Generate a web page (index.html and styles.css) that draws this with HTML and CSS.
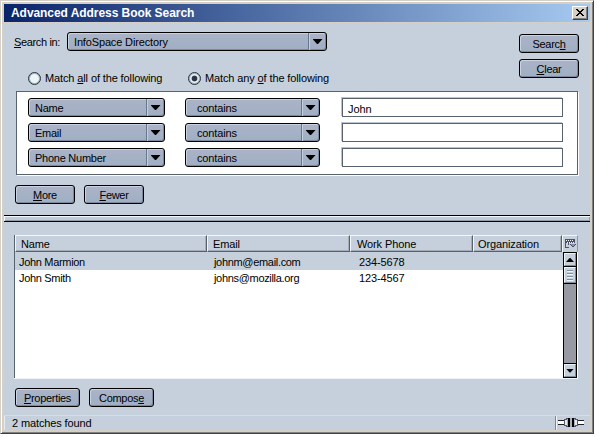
FILE: index.html
```
<!DOCTYPE html>
<html lang="en">
<head>
<meta charset="utf-8">
<title>Advanced Address Book Search</title>
<link rel="stylesheet" href="styles.css">
</head>
<body>
<main class="window">
  <header class="titlebar">
    <h1>Advanced Address Book Search</h1>
    <button class="close" aria-label="Close"><svg width="8" height="7" viewBox="0 0 8 7" shape-rendering="crispEdges"><path d="M0 0h2v1h1v1h2v-1h1v-1h2v1h-1v1h-1v1h-1v1h1v1h1v1h1v1h-2v-1h-1v-1h-2v1h-1v1h-2v-1h1v-1h1v-1h1v-1h-1v-1h-1v-1h-1z" fill="#000"/></svg></button>
  </header>

  <section class="search">
    <div class="top">
      <div class="scope">
        <div class="scope-row">
          <label class="scope-label"><u>S</u>earch in:</label>
          <div class="select wide"><span>InfoSpace Directory</span><i class="arrow"></i></div>
        </div>
        <div class="radios">
          <label class="radio"><i class="dot"></i><span>Match <u>a</u>ll of the following</span></label>
          <label class="radio"><i class="dot on"></i><span>Match any <u>o</u>f the following</span></label>
        </div>
      </div>
      <div class="actions">
        <button class="btn"><span>Searc<u>h</u></span></button>
        <button class="btn"><span><u>C</u>lear</span></button>
      </div>
    </div>
    <div class="rules">
      <div class="rule"><div class="select field"><span>Name</span><i class="arrow"></i></div><div class="select op"><span>contains</span><i class="arrow"></i></div><div class="input"><span>John</span></div></div>
      <div class="rule"><div class="select field"><span>Email</span><i class="arrow"></i></div><div class="select op"><span>contains</span><i class="arrow"></i></div><div class="input"></div></div>
      <div class="rule"><div class="select field"><span>Phone Number</span><i class="arrow"></i></div><div class="select op"><span>contains</span><i class="arrow"></i></div><div class="input"></div></div>
    </div>
    <div class="buttons">
      <button class="btn"><span><u>M</u>ore</span></button>
      <button class="btn"><span><u>F</u>ewer</span></button>
    </div>
  </section>

  <div class="splitter"></div>

  <section class="results">
    <div class="tree">
      <div class="thead">
        <div class="th">Name</div><div class="th">Email</div><div class="th">Work Phone</div><div class="th">Organization</div>
        <div class="picker"><svg width="12" height="11" viewBox="0 0 12 11" shape-rendering="crispEdges"><path d="M1 1h10v4h-10z" fill="#4d526b"/><path d="M2 2h1v1h-1zM4 2h1v1h-1zM6 2h1v1h-1zM8 2h1v1h-1zM3 4h1v1h-1zM5 4h1v1h-1zM7 4h1v1h-1zM9 4h1v1h-1z" fill="#eef3f8"/><path d="M1 5h1v4h3v1h-4zM4 5h1v2h-1zM6 6h6v1h-1v1h-1v1h-2v-1h-1v-1h-1z" fill="#4d526b"/><path d="M7 6h4v1h-1v1h-2v-1h-1z" fill="#8a90a8"/></svg></div>
      </div>
      <div class="tbody">
        <div class="rows">
          <div class="row selected"><span class="c1">John Marmion</span><span class="c2">johnm@email.com</span><span class="c3">234-5678</span></div>
          <div class="row"><span class="c1">John Smith</span><span class="c2">johns@mozilla.org</span><span class="c3">123-4567</span></div>
        </div>
        <div class="scroll">
          <div class="sb up"><i></i></div>
          <div class="thumb"><i></i><i></i><i></i><i></i></div>
          <div class="track"></div>
          <div class="sb down"><i></i></div>
        </div>
      </div>
    </div>
    <div class="buttons lower">
      <button class="btn big"><span><u>P</u>roperties</span></button>
      <button class="btn big"><span>Compos<u>e</u></span></button>
    </div>
  </section>

  <footer class="status">
    <span>2 matches found</span>
    <div class="online"><svg width="26" height="11" viewBox="0 0 26 11" shape-rendering="crispEdges"><path d="M0 4h26v3h-26z" fill="#fff"/><path d="M0 3h26v1h-26zM0 7h26v1h-26z" fill="#222"/><path d="M6 2h2v-1h10v1h2v7h-2v1h-10v-1h-2z" fill="#555b66"/><path d="M7 3h2v5h-2zM17 3h2v5h-2z" fill="#e6e9ee"/><path d="M9 2h1v7h-1zM12 1h2v9h-2zM16 2h1v7h-1z" fill="#aab0b9"/><path d="M10 1h2v9h-2zM14 1h2v9h-2z" fill="#000"/></svg></div>
  </footer>
</main>
</body>
</html>
```
FILE: styles.css
```
* { box-sizing: border-box; }
html, body { margin: 0; background: #fff; }
body {
  width: 597px; height: 437px; overflow: hidden;
  font: 11px/14px "Liberation Sans", Arial, sans-serif; letter-spacing: -.12px; color: #000;
}
button { font: inherit; letter-spacing: -.3px; color: inherit; padding: 0; margin: 0; }
span { white-space: nowrap; }
u { text-underline-offset: 1px; text-decoration-thickness: 1px; text-decoration-skip-ink: none; }

.window {
  width: 594px; height: 434px; display: flex; flex-direction: column;
  border: 1px solid #d4d0c8; border-right-color: #404040; border-bottom-color: #404040;
  box-shadow: inset 1px 1px #fff, inset -1px -1px #808080, inset 0 0 0 3px #d4d0c8;
  padding: 3px; background: #c5d0dc;
}
.titlebar {
  flex: none; height: 19px; display: flex; align-items: center; justify-content: space-between;
  padding: 0 2px 1px 7px; border-bottom: 1px solid #d4d0c8;
  background: linear-gradient(90deg, #0a246a, #a6caf0);
}
.titlebar h1 { margin: 0; font: bold 12px/16px "Liberation Sans", sans-serif; color: #fff; white-space: nowrap; letter-spacing: -.06px; }
.close {
  width: 16px; height: 14px; display: flex; align-items: center; justify-content: center;
  background: #d4d0c8; border: 1px solid #fff; border-right-color: #404040; border-bottom-color: #404040;
  box-shadow: inset -1px -1px #808080;
}

.search { flex: none; height: 192px; padding: 9px 9px 0 10px; }
.top { display: flex; justify-content: space-between; height: 59px; }
.scope-row { display: flex; align-items: center; height: 19px; }
.scope-label { width: 53px; white-space: nowrap; letter-spacing: -.35px; }
.radios { display: flex; padding: 20px 0 0 14px; }
.radio { display: flex; align-items: center; height: 14px; width: 160px; gap: 4px; }
.dot {
  width: 13px; height: 13px; flex: none; border-radius: 50%; border: 1px solid #26323c;
  background: #eef5f8; box-shadow: inset 0 0 0 1px #9db2bd;
}
.dot.on { background: radial-gradient(circle, #2c3446 0 2.5px, #e8f0f4 3.3px); }
.actions { display: flex; flex-direction: column; gap: 6px; padding-top: 2px; margin-right: 2px; }

.btn, .select {
  height: 19px; border: 1px solid #000; border-radius: 3px;
  background: linear-gradient(#abb3c8, #a0afc3);
  box-shadow: inset 1px 1px #c9d3df, inset -1px -1px #7c889e;
}
.btn { width: 60px; display: flex; align-items: center; justify-content: center; padding-top: 1px; }
.btn.big { width: 65px; }
.select { display: flex; justify-content: space-between; align-items: center; padding-left: 6px; letter-spacing: -.15px; }
.select.wide { width: 260px; }
.select.field { width: 137px; letter-spacing: -.25px; }
.select.op { width: 135px; padding-left: 11px; margin-left: 20px; }
.arrow {
  width: 18px; height: 17px; display: flex; align-items: center; justify-content: center;
  border-left: 1px solid #68788c; box-shadow: inset 1px 0 #c2cfdd;
}
.arrow::before, .sb i {
  content: ""; width: 10px; height: 5px; background: #000;
  clip-path: polygon(0 0, 100% 0, 55% 100%, 45% 100%);
}

.rules {
  width: 562px; height: 84px; margin-left: 2px; padding: 6px 0 0 11px;
  display: flex; flex-direction: column; gap: 6px;
  background: #fff; border: 1px solid #59636f; box-shadow: 1px 1px #fff;
}
.rule { display: flex; height: 19px; }
.input {
  width: 221px; height: 19px; margin-left: 22px; padding: 3px 0 0 5px;
  background: #fff; border: 1px solid #59636f; box-shadow: -1px -1px #b9c6d2;
}
.buttons { display: flex; gap: 9px; padding: 10px 0 0 1px; }

.splitter {
  flex: none; height: 7px; border-top: 1px solid #000; border-bottom: 1px solid #000;
  background: #c1ccd9; box-shadow: inset 1px 1px #f4f8fa, inset -1px -1px #8f9dad;
}

.results { flex: none; height: 193px; padding: 13px 12px 0 10px; }
.tree { height: 143px; border-left: 1px solid #59636f; box-shadow: 0 1px #eef4f8; background: #fff; }
.thead { display: flex; height: 17px; background: #c5d0dc; }
.th {
  height: 17px; padding: 1px 0 0 5px; border: 1px solid #f2f6f9; white-space: nowrap;
  border-right-color: #59606c; border-bottom-color: #59606c; box-shadow: inset -1px -1px #a4adb8;
}
.th:nth-child(1) { width: 192px; }
.th:nth-child(2) { width: 143px; }
.th:nth-child(3) { width: 123px; padding-left: 6px; }
.th:nth-child(4) { width: 89px; padding-left: 4px; }
.picker { flex: 1; padding: 2px 0 0 1px; border: 1px solid #f2f6f9; border-right-color: #8c98a6; border-bottom: 0; }
.picker svg { display: block; }
.tbody { display: flex; height: 126px; }
.rows { flex: 1; letter-spacing: -.32px; }
.row { display: flex; height: 17px; }
.row.selected { height: 18px; background: #c5d0dc; }
.row span { padding-top: 1px; }
.row.selected span { padding-top: 3px; }
.row .c1 { width: 196px; padding-left: 4px; }
.row .c2 { width: 145px; padding-left: 3px; }
.row .c3 { padding-left: 3px; letter-spacing: -.12px; }
.scroll { width: 14px; display: flex; flex-direction: column; background: #000; padding: 0 1px 1px; margin-right: 1px; }
.sb { height: 13px; margin-top: 1px; display: flex; align-items: center; justify-content: center; background: #c5d0dc; border: 1px solid #eef4f8; border-right-color: #7f8c9c; border-bottom-color: #7f8c9c; }
.sb i { width: 8px; height: 4px; }
.up i { transform: scaleY(-1); }
.thumb { height: 16px; margin: 1px 0; padding: 1px 2px; display: flex; flex-direction: column; justify-content: space-around; background: #c5d0dc; border: 1px solid #eef4f8; border-right-color: #7f8c9c; border-bottom-color: #7f8c9c; }
.thumb i { height: 1px; background: #8190a3; box-shadow: 0 1px #eff5f8; }
.track { flex: 1; background: #9999a3; }

.status {
  flex: 1; display: flex; justify-content: space-between; align-items: center;
  border-top: 1px solid #d5dee6; padding-left: 8px; box-shadow: inset 1px 0 #e5ebf0;
}
.online { width: 35px; height: 14px; padding: 1px 0 0 2px; border-left: 1px solid #7d8896; box-shadow: inset 1px 0 #eef4f8; }
.online svg { display: block; }
```
